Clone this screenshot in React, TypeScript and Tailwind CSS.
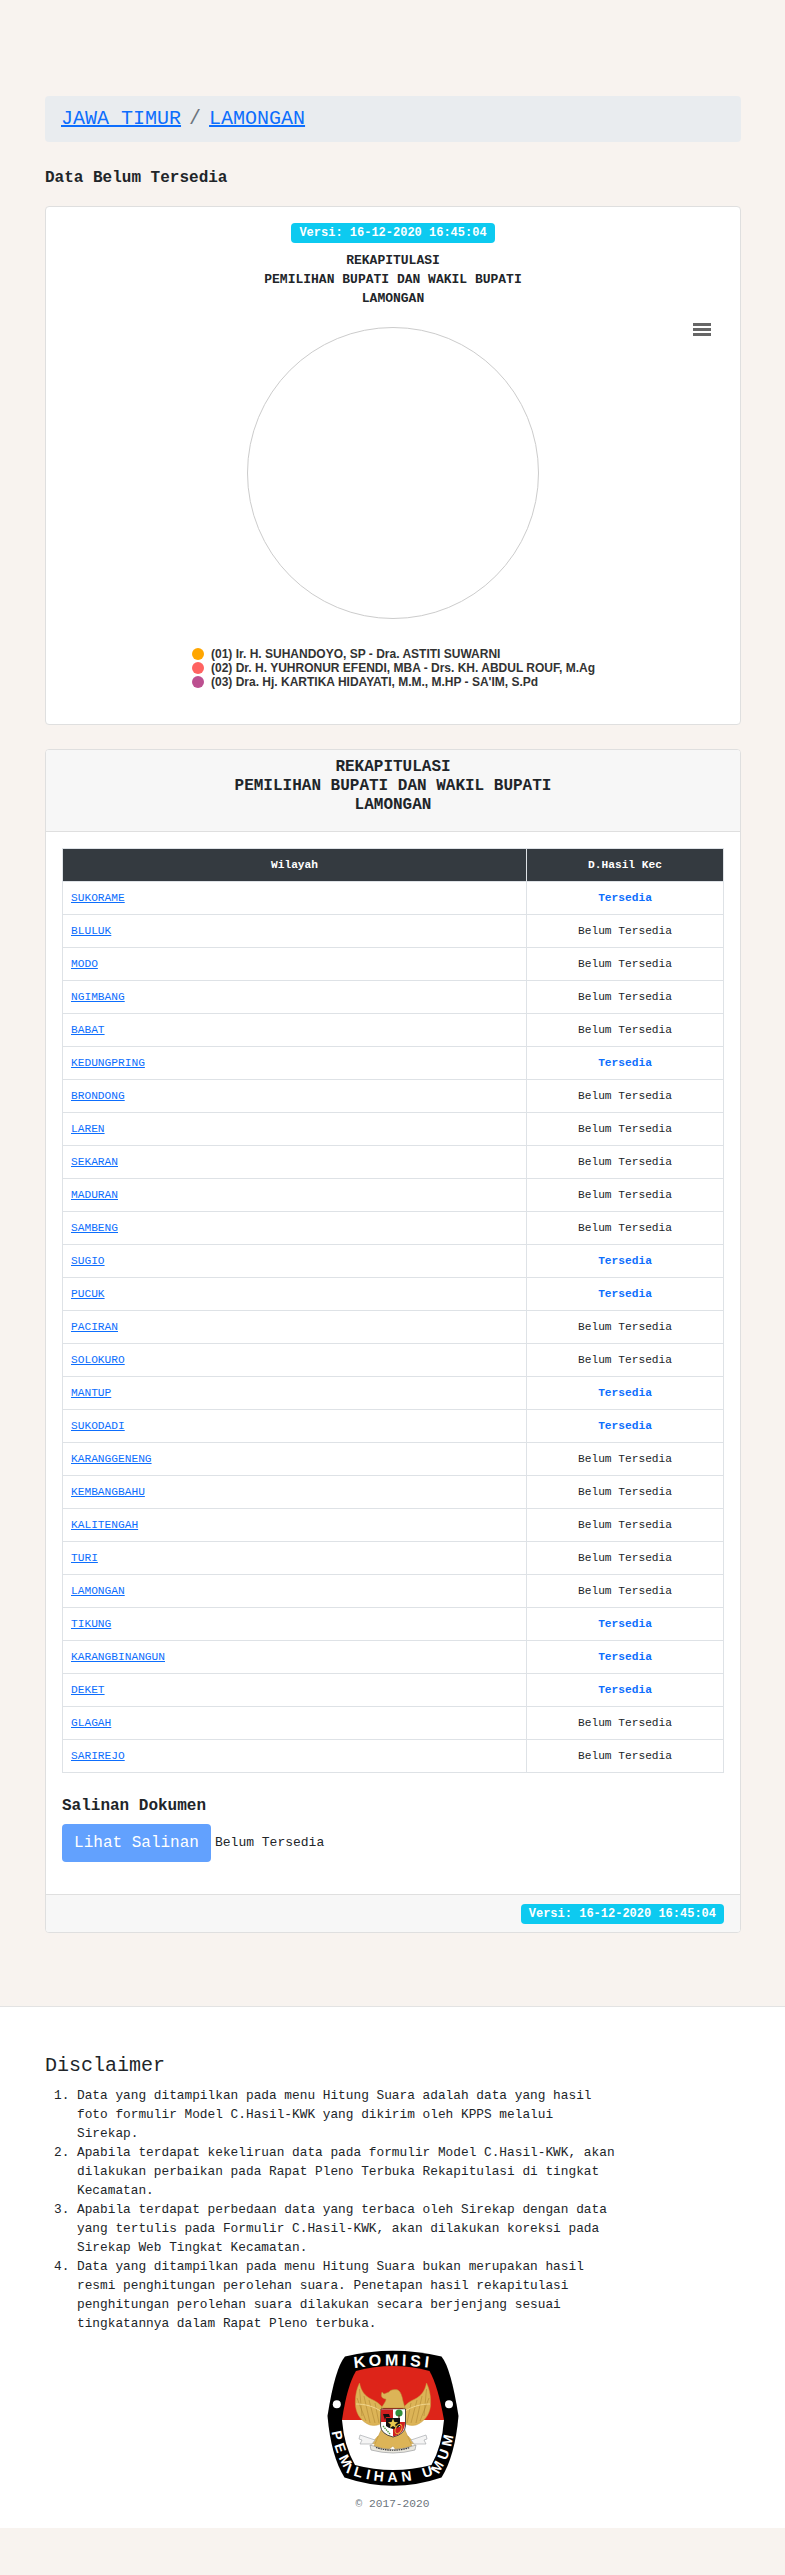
import React from "react";

const rows: [string, boolean][] = [
  ["SUKORAME", true],
  ["BLULUK", false],
  ["MODO", false],
  ["NGIMBANG", false],
  ["BABAT", false],
  ["KEDUNGPRING", true],
  ["BRONDONG", false],
  ["LAREN", false],
  ["SEKARAN", false],
  ["MADURAN", false],
  ["SAMBENG", false],
  ["SUGIO", true],
  ["PUCUK", true],
  ["PACIRAN", false],
  ["SOLOKURO", false],
  ["MANTUP", true],
  ["SUKODADI", true],
  ["KARANGGENENG", false],
  ["KEMBANGBAHU", false],
  ["KALITENGAH", false],
  ["TURI", false],
  ["LAMONGAN", false],
  ["TIKUNG", true],
  ["KARANGBINANGUN", true],
  ["DEKET", true],
  ["GLAGAH", false],
  ["SARIREJO", false],
];

const legend: [string, string][] = [
  ["bg-[#ffa600]", "(01) Ir. H. SUHANDOYO, SP - Dra. ASTITI SUWARNI"],
  ["bg-[#ff6361]", "(02) Dr. H. YUHRONUR EFENDI, MBA - Drs. KH. ABDUL ROUF, M.Ag"],
  ["bg-[#bc5090]", "(03) Dra. Hj. KARTIKA HIDAYATI, M.M., M.HP - SA'IM, S.Pd"],
];

const disclaimers = [
  "Data yang ditampilkan pada menu Hitung Suara adalah data yang hasil foto formulir Model C.Hasil-KWK yang dikirim oleh KPPS melalui Sirekap.",
  "Apabila terdapat kekeliruan data pada formulir Model C.Hasil-KWK, akan dilakukan perbaikan pada Rapat Pleno Terbuka Rekapitulasi di tingkat Kecamatan.",
  "Apabila terdapat perbedaan data yang terbaca oleh Sirekap dengan data yang tertulis pada Formulir C.Hasil-KWK, akan dilakukan koreksi pada Sirekap Web Tingkat Kecamatan.",
  "Data yang ditampilkan pada menu Hitung Suara bukan merupakan hasil resmi penghitungan perolehan suara. Penetapan hasil rekapitulasi penghitungan perolehan suara dilakukan secara berjenjang sesuai tingkatannya dalam Rapat Pleno terbuka.",
];

function Badge() {
  return (
    <span className="inline-block rounded-[4px] bg-[#0dcaf0] px-[8px] py-[4px] text-[12px] leading-[12px] font-bold text-white whitespace-nowrap">
      Versi: 16-12-2020 16:45:04
    </span>
  );
}

function Wing({ flip }: { flip?: boolean }) {
  return (
    <g transform={flip ? "matrix(-1 0 0 1 146 0)" : undefined}>
      <path
        d="M39.5 37 C36 44 35 52 35.5 60 C36.5 69 42 76 50 79 C55 80 60 79 63 76 L63 62 C60 58 56 55 51 53 C45 50 41 45 39.5 37 Z"
        fill="#dcb457"
        stroke="#c99b3c"
        strokeWidth="0.5"
      />
      <path
        d="M39.5 43 L42 70 M37 52 L46 75 M44 50 L50 77 M49 54 L55 77 M55 57 L59 77"
        stroke="#a87f2c"
        strokeWidth="0.7"
        fill="none"
        opacity="0.7"
      />
      <path d="M36 58 C44 58 54 60 62 66" stroke="#f0d68e" strokeWidth="1" fill="none" />
      <path d="M58 90 L51 98 L58 97 L65 92 Z" fill="#dcb457" stroke="#b88f36" strokeWidth="0.5" />
      <path
        d="M55 94 L40 89 L39 93 L42 94 L40 98 L52 98 Z"
        fill="#f4f4f4"
        stroke="#a9acb0"
        strokeWidth="0.7"
      />
    </g>
  );
}

function Logo() {
  return (
    <svg viewBox="0 0 146 146" className="block h-[146px] w-[146px]" aria-label="KPU">
      <path
        d="M25 10.5 Q73 -1 121.5 10.5 Q131 22 138.5 70 Q135 110 121.5 131.5 Q73 148 24.5 131.5 Q11 110 7.5 70 Q15 22 25 10.5 Z"
        fill="#000"
      />
      <path d="M36 25 Q73 15 109.5 25 Q118 40 124 74 L22 74 Q27 40 36 25 Z" fill="#dd2419" />
      <path d="M22 74 L124 74 Q122 100 111.5 119 Q73 129 35 119 Q24 100 22 74 Z" fill="#fff" />
      <circle cx="16.8" cy="58.3" r="4" fill="#fff" />
      <circle cx="129" cy="58.3" r="4" fill="#fff" />
      <defs>
        <path id="kpuTop" d="M28 23 Q73 16 118 23" />
        <path id="kpuBottom" d="M11 80 C14 105 22 120 27 127 Q73 145 119 127 C124 120 132 105 135 80" />
      </defs>
      <text
        fill="#fff"
        fontFamily="'Liberation Sans', sans-serif"
        fontWeight="700"
        fontSize="16"
        letterSpacing="3.5"
        textAnchor="middle"
      >
        <textPath href="#kpuTop" startOffset="50%">
          KOMISI
        </textPath>
      </text>
      <text
        fill="#fff"
        fontFamily="'Liberation Sans', sans-serif"
        fontWeight="700"
        fontSize="14"
        letterSpacing="4.2"
        textAnchor="middle"
      >
        <textPath href="#kpuBottom" startOffset="50%">
          PEMILIHAN UMUM
        </textPath>
      </text>
      <Wing />
      <Wing flip />
      <path
        d="M62 46 L64 48 L69 46 C70 44 74 43 78 44 C81 46 82 50 83 55 L85 62 L61 62 C64 58 66 55 66 53 C63 53 60 51 62 46 Z"
        fill="#dcb457"
        stroke="#b88f36"
        strokeWidth="0.5"
      />
      <path d="M62 82 L84 82 L92 100 L76 104 L73 100 L68 104 L54 100 Z" fill="#dcb457" stroke="#b88f36" strokeWidth="0.5" />
      <path d="M50 99 Q73 108 96 99 L95 104 Q73 110 51 104 Z" fill="#e8e6de" stroke="#8b8d90" strokeWidth="0.6" />
      <path d="M56 101.5 Q73 107 90 101.5" stroke="#333" strokeWidth="1.2" strokeDasharray="1.5 0.8" fill="none" />
      <path d="M61 63 L85.5 63 L85.5 80 Q85 88 73 91 Q61 88 60.5 80 Z" fill="#fff" stroke="#222" strokeWidth="0.8" />
      <path d="M61 63.5 L73 63.5 L73 72 L66 72 L66 76 L61 76 Z" fill="#cf1f1f" />
      <path d="M73 63.5 L85 63.5 L85 76 L80 76 L80 72 L73 72 Z" fill="#fff" />
      <path d="M73 90.5 Q85 88 85 76 L80 76 L80 81 L73 81 Z" fill="#cf1f1f" />
      <path d="M66 72 L80 72 L80 80 Q78 82 73 83 Q68 82 66 80 Z" fill="#111" />
      <path d="M73 72.5 L74.4 76 L78 76.2 L75.2 78.4 L76.2 82 L73 80 L69.8 82 L70.8 78.4 L68 76.2 L71.6 76 Z" fill="#e8c94d" />
      <path d="M63 68 L69 68 L70 71 L66 71 L65 74 L64 71 Z" fill="#111" />
      <circle cx="79" cy="67" r="3.6" fill="#2f8f3a" />
      <rect x="78.4" y="69" width="1.2" height="3" fill="#5c3b1c" />
      <ellipse cx="78.5" cy="83" rx="3" ry="5" transform="rotate(25 78.5 83)" fill="none" stroke="#e8b53a" strokeWidth="1" />
      <path d="M63 80 L70 88" stroke="#4f9b3f" strokeWidth="1.4" strokeDasharray="1.5 0.8" />
    </svg>
  );
}

export default function App() {
  return (
    <div className="h-[2575px] w-[785px] overflow-hidden bg-[#f8f3ef] font-['Liberation_Mono',monospace] text-[#212529]">
      <main className="pt-[96px] pr-[44px] pl-[45px]">
        <nav className="flex h-[46px] items-center rounded-[4px] bg-[#e9ecef] px-[16px] text-[20px] leading-[30px]">
          <a className="text-[#0d6efd] underline">JAWA TIMUR</a>
          <span className="px-[8px] text-[#6c757d]">/</span>
          <a className="text-[#0d6efd] underline">LAMONGAN</a>
        </nav>

        <h2 className="mt-[24px] mb-[16px] text-[16px] leading-[24px] font-bold">Data Belum Tersedia</h2>

        <section className="relative flex h-[519px] flex-col items-center rounded-[4px] border border-[#dfdfdf] bg-white pt-[16px]">
          <Badge />
          <div className="mt-[8px] text-center text-[13px] leading-[19px] font-bold text-[#212529]">
            <div>REKAPITULASI</div>
            <div>PEMILIHAN BUPATI DAN WAKIL BUPATI</div>
            <div>LAMONGAN</div>
          </div>
          <div className="mt-[19px] h-[292px] w-[292px] rounded-full border border-[#cccccc]" />
          <ul className="mt-[28px] self-start pl-[146px] font-['Liberation_Sans',Arial,sans-serif] text-[12px] leading-[14px] font-bold text-[#333333]">
            {legend.map(([color, text]) => (
              <li key={text} className="flex h-[14px] items-center whitespace-nowrap">
                <span className={`mr-[7px] h-[12px] w-[12px] rounded-full ${color}`} />
                {text}
              </li>
            ))}
          </ul>
          <svg viewBox="0 0 18 13" className="absolute top-[116px] right-[29px] h-[13px] w-[18px]">
            <path d="M0 1.5H18M0 6.5H18M0 11.5H18" stroke="#666666" strokeWidth="3" />
          </svg>
        </section>

        <section className="mt-[24px] overflow-hidden rounded-[4px] border border-[#dfdfdf] bg-white">
          <header className="h-[82px] border-b border-[#dfdfdf] bg-[#f7f7f7] pt-[8px] text-center text-[16px] leading-[19px] font-bold">
            <div>REKAPITULASI</div>
            <div>PEMILIHAN BUPATI DAN WAKIL BUPATI</div>
            <div>LAMONGAN</div>
          </header>
          <div className="px-[16px] pt-[16px] pb-[32px]">
            <table className="w-full table-fixed border-collapse text-[11.2px] leading-[16.8px]">
              <colgroup>
                <col className="w-[464px]" />
                <col />
              </colgroup>
              <thead>
                <tr className="h-[33px] bg-[#343a40] text-center font-bold text-white">
                  <th className="border border-[#dee2e6] font-bold">Wilayah</th>
                  <th className="border border-[#dee2e6] font-bold">D.Hasil Kec</th>
                </tr>
              </thead>
              <tbody>
                {rows.map(([name, available]) => (
                  <tr key={name} className="h-[33px]">
                    <td className="border border-[#dee2e6] pl-[8px]">
                      <a className="text-[#0d6efd] underline">{name}</a>
                    </td>
                    <td
                      className={
                        available
                          ? "border border-[#dee2e6] text-center font-bold text-[#0d6efd]"
                          : "border border-[#dee2e6] text-center"
                      }
                    >
                      {available ? "Tersedia" : "Belum Tersedia"}
                    </td>
                  </tr>
                ))}
              </tbody>
            </table>
            <h3 className="mt-[24px] mb-[8px] text-[16px] leading-[19px] font-bold">Salinan Dokumen</h3>
            <div className="flex items-center">
              <span className="flex h-[38px] w-[149px] items-center justify-center rounded-[4px] bg-[#62a1fe] text-[16px] text-white">
                Lihat Salinan
              </span>
              <span className="ml-[4px] text-[13px]">Belum Tersedia</span>
            </div>
          </div>
          <footer className="flex h-[38px] items-center justify-end border-t border-[#dfdfdf] bg-[#f7f7f7] pr-[16px]">
            <Badge />
          </footer>
        </section>
      </main>

      <footer className="mt-[73px] h-[522px] border-t border-[#e3e3e3] bg-white px-[45px] pt-[47px]">
        <h5 className="text-[20px] leading-[24px]">Disclaimer</h5>
        <ol className="mt-[8px] w-[572px] list-decimal pl-[32px] text-[12.8px] leading-[19px]">
          {disclaimers.map((d) => (
            <li key={d}>{d}</li>
          ))}
        </ol>
        <div className="mt-[13px] flex flex-col items-center">
          <Logo />
          <p className="mt-[4px] text-[11.2px] leading-[17px] text-[#6c757d]">© 2017-2020</p>
        </div>
      </footer>
    </div>
  );
}
